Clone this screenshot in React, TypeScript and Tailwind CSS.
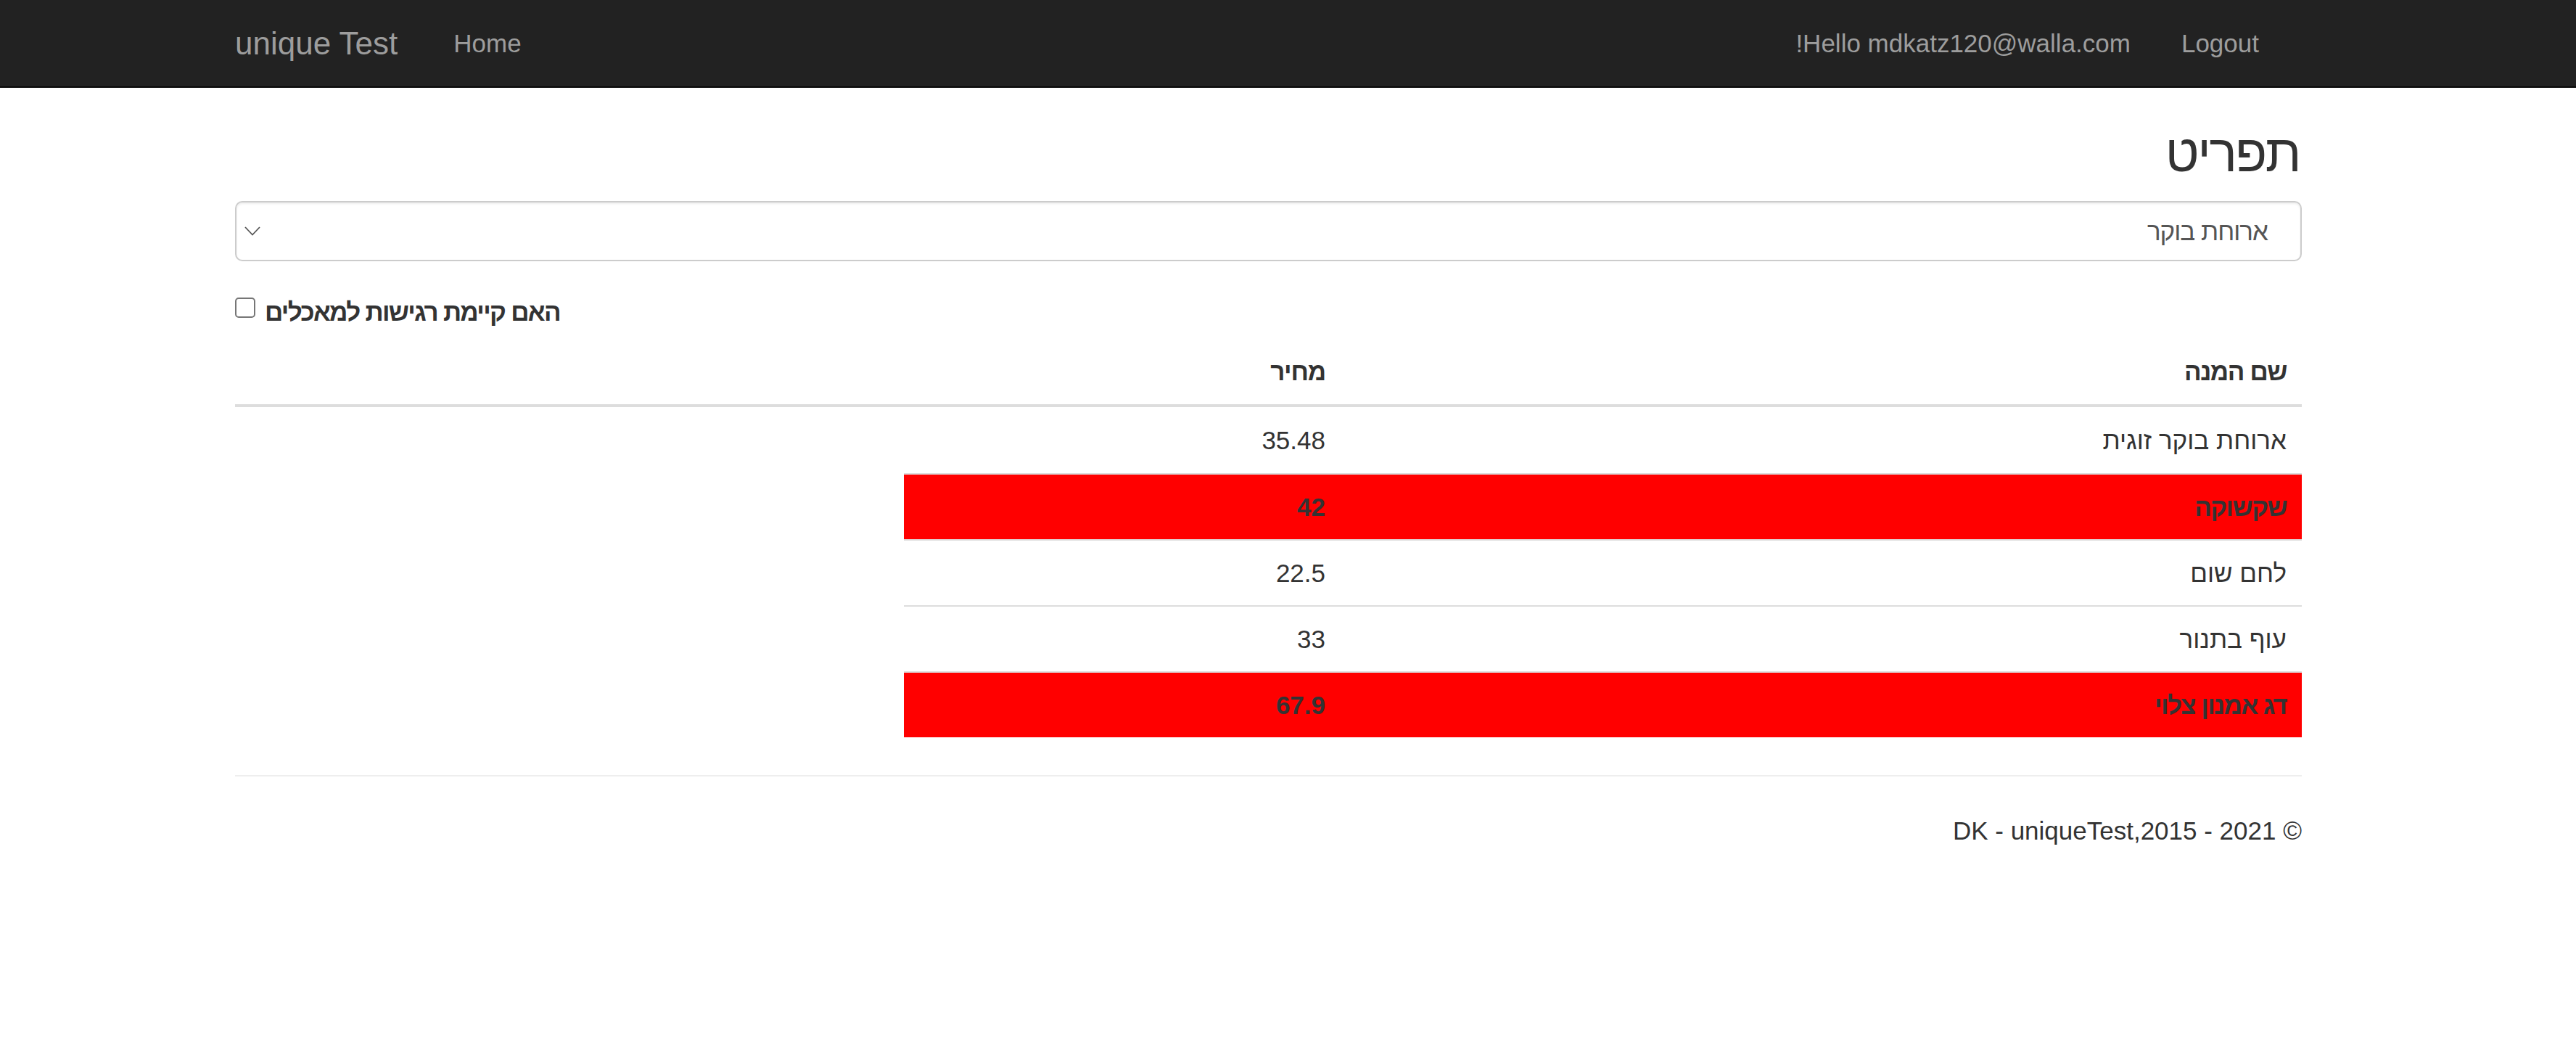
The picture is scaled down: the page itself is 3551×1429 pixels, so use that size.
import React from 'react';

type Dish = { name: string; price: string; allergen: boolean };

const dishes: Dish[] = [
    { name: 'ארוחת בוקר זוגית', price: '35.48', allergen: false },
    { name: 'שקשוקה', price: '42', allergen: true },
    { name: 'לחם שום', price: '22.5', allergen: false },
    { name: 'עוף בתנור', price: '33', allergen: false },
    { name: 'דג אמנון צלוי', price: '67.9', allergen: true },
];

export default function App() {
    return (
        <div className="min-h-screen bg-white text-[#333] text-[35px] leading-[50px] font-['Liberation_Sans','Arimo','DejaVu_Sans',sans-serif]">
            {/* navbar */}
            <nav className="h-[121px] bg-[#222] border-b-2 border-[#080808]">
                <div className="ml-[324px] w-[2849px] h-full flex items-center text-[#9d9d9d]">
                    <span className="text-[44px]">unique Test</span>
                    <span className="ml-[77px]">Home</span>
                    <span className="ml-auto">!Hello mdkatz120@walla.com</span>
                    <span className="ml-[70px] mr-[59px]">Logout</span>
                </div>
            </nav>

            <main className="ml-[324px] w-[2849px]">
                <h2 dir="rtl" className="mt-[49px] pr-[3px] text-[72px] leading-[82px] font-normal tracking-[-2.5px]">תפריט</h2>

                {/* meal select */}
                <div className="mt-[25px] h-[83px] border-2 border-[#ccc] rounded-[10px] flex items-center justify-between pl-[11px] pr-[45px] shadow-[inset_0_2px_3px_rgba(0,0,0,0.075)]">
                    <svg width="22" height="13" viewBox="0 0 22 13" fill="none">
                        <polyline points="1,1 11,11.5 21,1" stroke="#555" strokeWidth="1.8" />
                    </svg>
                    <span dir="rtl" className="text-[#555] tracking-[-1px]">ארוחת בוקר</span>
                </div>

                {/* allergy checkbox */}
                <div className="mt-[45px] flex items-start">
                    <div className="mt-[5px] w-[28px] h-[28px] border-2 border-[#767676] rounded-[5px] bg-white" />
                    <span dir="rtl" className="ml-[13px] font-bold tracking-[-1.7px]">האם קיימת רגישות למאכלים</span>
                </div>

                {/* dishes table */}
                <div dir="rtl" className="mt-[12px]">
                    <div className="grid grid-cols-[1325px_602px_922px] border-b-4 border-[#ddd] font-bold">
                        <div className="h-[90px] flex items-center pr-[21px] tracking-[-1.4px]">שם המנה</div>
                        <div className="h-[90px] flex items-center pr-[21px] tracking-[-1.2px]">מחיר</div>
                        <div />
                    </div>
                    {dishes.map((dish, index) => {
                        const cell = `h-[91px] flex items-center pr-[21px] ${index > 0 ? 'border-t-2 border-[#ddd]' : ''} ${dish.allergen ? 'bg-[#ff0000] font-bold' : ''}`;
                        return (
                            <div key={dish.name} className="grid grid-cols-[1325px_602px_922px]">
                                <div className={cell}>
                                    <span className={dish.allergen ? 'tracking-[-1.6px]' : ''}>{dish.name}</span>
                                </div>
                                <div className={cell}><span dir="ltr">{dish.price}</span></div>
                                <div />
                            </div>
                        );
                    })}
                </div>

                <hr className="mt-[52px] border-0 border-t-2 border-[#eee]" />

                <footer className="mt-[50px] flex justify-end">
                    <p dir="ltr">DK - uniqueTest,2015 - 2021 ©</p>
                </footer>
            </main>
        </div>
    );
}
